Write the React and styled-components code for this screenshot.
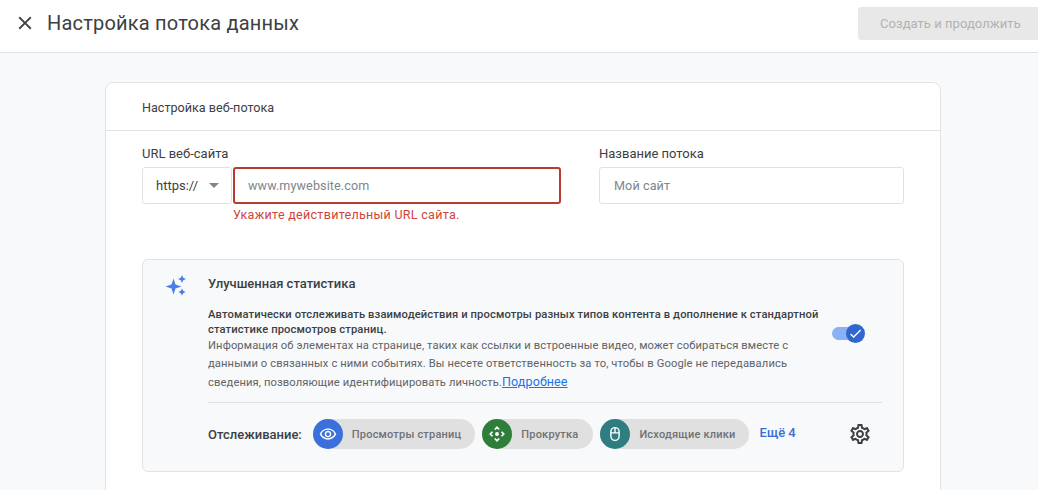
import React from 'react'
import styled, { createGlobalStyle } from 'styled-components'
import { MdClose, MdOutlineRemoveRedEye, MdOutlineSettings, MdCheck } from 'react-icons/md'

const GlobalStyle = createGlobalStyle`
  html, body {
    margin: 0;
    height: 100%;
    overflow: hidden;
    background: #f8f9fa;
    font-family: Roboto, "Noto Sans", sans-serif;
  }
  * { box-sizing: border-box; }
`

const Page = styled.div`
  width: 1038px;
  height: 490px;
  overflow: hidden;
`

const Header = styled.header`
  height: 53px;
  background: #fff;
  border-bottom: 1px solid #dfe1e5;
  display: flex;
  align-items: center;
  padding: 0 0 6px 14px;
`

const CloseButton = styled.span`
  display: flex;
  color: #3c4043;
  margin-right: 11px;
`

const Title = styled.h1`
  margin: 0;
  font-size: 20px;
  font-weight: 400;
  color: #3c4043;
  flex: 1;
  letter-spacing: 0.2px;
`

const CreateButton = styled.button`
  width: 186px;
  height: 33px;
  margin-right: -6px;
  border: 0;
  border-radius: 3px;
  background: #e8e8e8;
  color: #b1b2b3;
  font: 13px Roboto, sans-serif;
  letter-spacing: 0.05px;
  text-align: left;
  padding-left: 22px;
`

const Main = styled.main`
  padding: 29px 97px 0 105px;
`

const Card = styled.section`
  background: #fff;
  border: 1px solid #e0e2e6;
  border-radius: 8px 8px 0 0;
  height: 420px;
`

const CardHead = styled.div`
  height: 48px;
  border-bottom: 1px solid #e0e2e6;
  display: flex;
  align-items: center;
  padding: 1px 0 0 36px;
  font-size: 12.6px;
  color: #3c4043;
`

const CardBody = styled.div`
  padding: 15px 36px 0;
`

const Fields = styled.div`
  display: grid;
  grid-template-columns: 419px 305px;
  column-gap: 38px;
  height: 113px;
`

const Label = styled.div`
  font-size: 13px;
  line-height: 16px;
  color: #3c4043;
  margin-bottom: 5px;
`

const UrlRow = styled.div`
  display: flex;
  gap: 1px;
`

const Select = styled.div`
  width: 90px;
  height: 37px;
  border: 1px solid #dfe1e5;
  border-radius: 3px;
  display: flex;
  align-items: center;
  padding-left: 13px;
  font-size: 13px;
  color: #3c4043;
`

const Caret = styled.span`
  width: 0;
  height: 0;
  margin-left: 11px;
  border-left: 5px solid transparent;
  border-right: 5px solid transparent;
  border-top: 5px solid #80868b;
`

const Input = styled.div`
  flex: 1;
  height: 37px;
  border: ${p => (p.$error ? '2px solid #b93a30' : '1px solid #dfe1e5')};
  border-radius: 3px;
  display: flex;
  align-items: center;
  padding-left: ${p => (p.$error ? '13px' : '14px')};
  font-size: 12.6px;
  letter-spacing: 0.1px;
  color: #80868b;
`

const ErrorText = styled.div`
  margin: 4px 0 0 91px;
  font-size: 12.5px;
  line-height: 14px;
  letter-spacing: 0.3px;
  color: #d0443a;
`

const Panel = styled.div`
  height: 213px;
  border: 1px solid #e0e2e6;
  border-radius: 6px;
  background: #f8f9fa;
  display: grid;
  grid-template-columns: 65px 1fr;
  padding: 0 21px 0 0;
`

const Spark = styled.svg`
  width: 24px;
  height: 24px;
  margin: 13px 0 0 21px;
`

const PanelBody = styled.div`
  min-width: 0;
  padding-top: 16px;
`

const PanelTitle = styled.div`
  font-size: 13px;
  font-weight: 500;
  line-height: 16px;
  color: #3c4043;
  margin-bottom: 15px;
`

const Intro = styled.div`
  display: flex;
  justify-content: space-between;
  align-items: flex-start;
  height: 96px;
  padding-right: 18px;
  border-bottom: 1px solid #dfe1e5;
`

const Copy = styled.div`
  width: 615px;
  font-size: 11.2px;
  line-height: 18px;
  letter-spacing: 0.11px;
  color: #5f6368;
`

const Strong = styled.div`
  font-weight: 500;
  line-height: 15px;
  letter-spacing: 0.12px;
  color: #3c4043;
`

const MoreLink = styled.a`
  color: #1a73e8;
  font-size: 12.5px;
  text-decoration: underline;
`

const Toggle = styled.div`
  position: relative;
  width: 32px;
  height: 13px;
  margin-top: 20px;
  border-radius: 7px;
  background: #8ab0f5;
`

const ToggleKnob = styled.span`
  position: absolute;
  right: -1px;
  top: -3px;
  width: 19px;
  height: 19px;
  border-radius: 50%;
  background: #2f66d0;
  color: #fff;
  display: flex;
  align-items: center;
  justify-content: center;
`

const Tracking = styled.div`
  display: flex;
  align-items: center;
  height: 62px;
`

const TrackLabel = styled.span`
  font-size: 13px;
  font-weight: 500;
  color: #3c4043;
  margin-right: 11px;
`

const Chip = styled.div`
  display: flex;
  align-items: center;
  height: 30px;
  border-radius: 15px;
  background: #e0e0e0;
  margin-right: 7px;
  padding-right: ${p => p.$pad || 14}px;
`

const ChipIcon = styled.span`
  width: 30px;
  height: 30px;
  border-radius: 50%;
  background: ${p => p.$color};
  color: #fff;
  display: flex;
  align-items: center;
  justify-content: center;
  margin-right: 9px;
`

const ChipText = styled.span`
  font-size: 11px;
  font-weight: 500;
  letter-spacing: 0.2px;
  color: #6f7276;
`

const More = styled.a`
  margin: -4px 0 0 4px;
  font-size: 13px;
  font-weight: 500;
  color: #3b6fd4;
`

const Gear = styled.span`
  display: flex;
  margin-left: 52px;
  color: #3c4043;
`

// four chevrons round a dot, the scroll icon on the green chip
const ScrollIcon = () => (
  <svg width="18" height="18" viewBox="0 0 24 24" fill="none" stroke="#fff" strokeWidth="2.2">
    <path d="M9 6l3-3 3 3M9 18l3 3 3-3M6 9l-3 3 3 3M18 9l3 3-3 3" />
    <circle cx="12" cy="12" r="2.6" fill="#fff" stroke="none" />
  </svg>
)

const MouseIcon = () => (
  <svg width="18" height="18" viewBox="0 0 24 24" fill="none" stroke="#fff" strokeWidth="1.9">
    <rect x="6.5" y="3.5" width="11" height="17" rx="5.5" />
    <path d="M12 3.5v7M6.5 10.5h11" />
  </svg>
)

export default function App() {
  return (
    <Page>
      <GlobalStyle />
      <Header>
        <CloseButton><MdClose size={22} /></CloseButton>
        <Title>Настройка потока данных</Title>
        <CreateButton>Создать и продолжить</CreateButton>
      </Header>
      <Main>
        <Card>
          <CardHead>Настройка веб-потока</CardHead>
          <CardBody>
            <Fields>
              <div>
                <Label>URL веб-сайта</Label>
                <UrlRow>
                  <Select>https://<Caret /></Select>
                  <Input $error>www.mywebsite.com</Input>
                </UrlRow>
                <ErrorText>Укажите действительный URL сайта.</ErrorText>
              </div>
              <div>
                <Label>Название потока</Label>
                <Input>Мой сайт</Input>
              </div>
            </Fields>
            <Panel>
              <Spark viewBox="0 0 24 24" fill="#4a7fe8">
                <path d="M9.5 5.5l2 6 6 2-6 2-2 6-2-6-6-2 6-2z" />
                <path d="M18 2l1.2 2.8L22 6l-2.8 1.2L18 10l-1.2-2.8L14 6l2.8-1.2z" />
                <path d="M18 15.5l1.2 2.3 2.3 1.2-2.3 1.2L18 22.5l-1.2-2.3-2.3-1.2 2.3-1.2z" />
              </Spark>
              <PanelBody>
                <PanelTitle>Улучшенная статистика</PanelTitle>
                <Intro>
                  <Copy>
                    <Strong>Автоматически отслеживать взаимодействия и просмотры разных типов контента в дополнение к стандартной статистике просмотров страниц.</Strong>
                    Информация об элементах на странице, таких как ссылки и встроенные видео, может собираться вместе с данными о связанных с ними событиях. Вы несете ответственность за то, чтобы в Google не передавались сведения, позволяющие идентифицировать личность.<MoreLink>Подробнее</MoreLink>
                  </Copy>
                  <Toggle>
                    <ToggleKnob><MdCheck size={15} /></ToggleKnob>
                  </Toggle>
                </Intro>
                <Tracking>
                  <TrackLabel>Отслеживание:</TrackLabel>
                  <Chip>
                    <ChipIcon $color="#3b6fdc"><MdOutlineRemoveRedEye size={18} /></ChipIcon>
                    <ChipText>Просмотры страниц</ChipText>
                  </Chip>
                  <Chip $pad={15}>
                    <ChipIcon $color="#2f7d3b"><ScrollIcon /></ChipIcon>
                    <ChipText>Прокрутка</ChipText>
                  </Chip>
                  <Chip $pad={13}>
                    <ChipIcon $color="#2e7d80"><MouseIcon /></ChipIcon>
                    <ChipText>Исходящие клики</ChipText>
                  </Chip>
                  <More>Ещё 4</More>
                  <Gear><MdOutlineSettings size={24} /></Gear>
                </Tracking>
              </PanelBody>
            </Panel>
          </CardBody>
        </Card>
      </Main>
    </Page>
  )
}
